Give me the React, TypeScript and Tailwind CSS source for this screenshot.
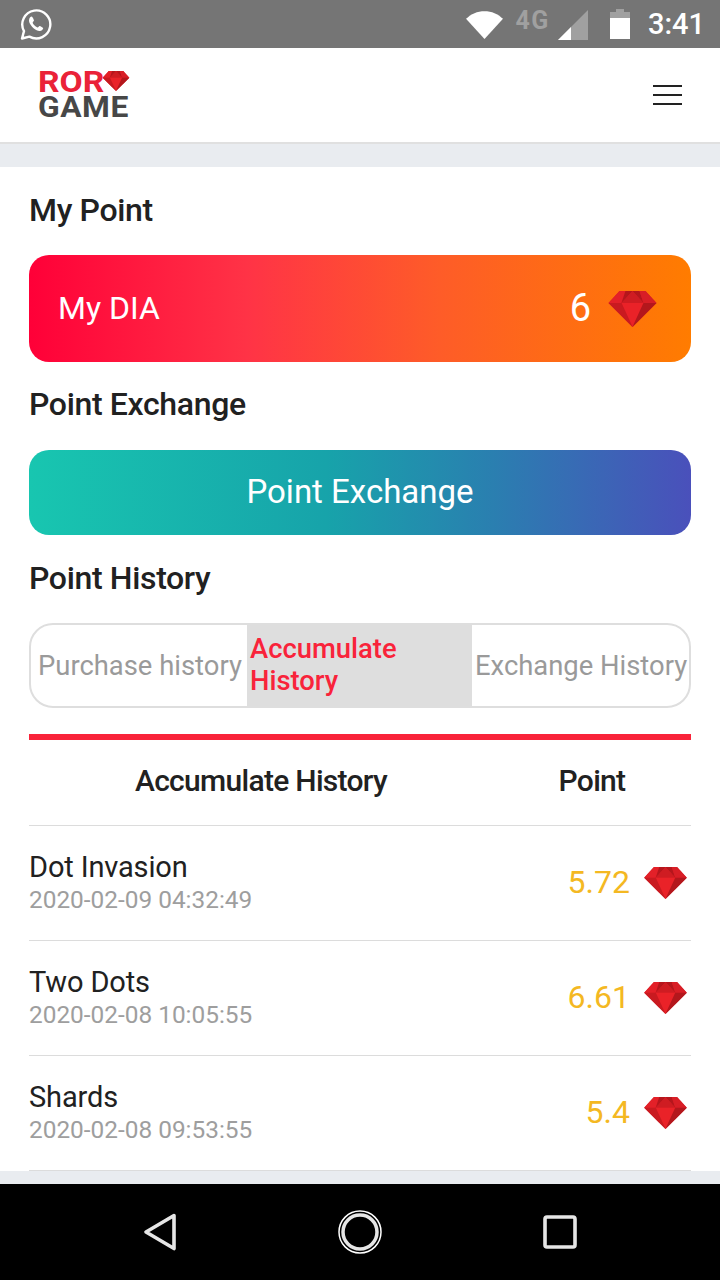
import React from 'react';

// ruby used in the logo, the balance card and the history rows
function Gem({ className }: { className?: string }) {
  return (
    <svg className={className} viewBox="0 0 48 36">
      <polygon points="11,0 37,0 48,12 24,36 0,12" fill="#d81e26" />
      <polygon points="11,0 17,0 13,12 0,12" fill="#e32028" />
      <polygon points="17,0 24,0 13,12" fill="#b5161c" />
      <polygon points="24,0 31,0 35,12" fill="#b5161c" />
      <polygon points="24,0 13,12 35,12" fill="#cf1c22" />
      <polygon points="31,0 37,0 48,12 35,12" fill="#d81e26" />
      <polygon points="13,12 35,12 24,36" fill="#ea2228" />
      <polygon points="35,12 48,12 24,36" fill="#b3171c" />
      <polygon points="0,12 13,12 24,36" fill="#c91a20" />
    </svg>
  );
}

function StatusBar() {
  return (
    <div className="h-12 bg-[#757575] flex items-center pl-[20px] pr-[15px] shrink-0">
      <svg className="w-8 h-8" viewBox="0 0 32 32" fill="none">
        <path
          d="M2 30.500l2-7.400A14 14 0 1 1 9.400 28.600z"
          stroke="#fff"
          strokeWidth="2.400"
          strokeLinejoin="round"
        />
        <path
          d="M11.600 8.600c-.9 0-2.600 1.400-2.600 3.800 0 3.400 4.800 9.600 10.200 10.600 2.200.3 4-1.300 4-2.900 0-.5-3-2.200-3.600-2.200-.7 0-1.200 1.500-1.900 1.500-1.500 0-5-3.300-5-4.800 0-.7 1.300-1.300 1.300-2 0-.5-1.500-3.900-2.400-4z"
          fill="#fff"
        />
      </svg>
      <div className="flex-1" />
      <svg className="w-[37px] h-[29px]" viewBox="0 0 36 28">
        <path d="M0 8.500C5 3.500 11 1 18 1s13 2.500 18 7.500L18 28z" fill="#fff" />
      </svg>
      <span className="ml-[13px] mb-[8px] text-[25px] leading-none font-bold tracking-[1.500px] text-[#a0a0a0]">
        4G
      </span>
      <svg className="ml-[8px] w-[30px] h-[30px] mt-[2px]" viewBox="0 0 30 30">
        <polygon points="30,0 30,30 0,30" fill="#a0a0a0" />
        <polygon points="13,17 13,30 0,30" fill="#fff" />
      </svg>
      <svg className="ml-[22px] w-[20px] h-[30px]" viewBox="0 0 20 30">
        <path d="M6 0h8v3h6v27H0V3h6z" fill="#fff" />
        <path d="M6 0h8v3h6v6H0V3h6z" fill="#a0a0a0" />
      </svg>
      <span className="ml-[18px] text-[29px] leading-none font-medium text-white">3:41</span>
    </div>
  );
}

function Header() {
  return (
    <div className="h-[96px] bg-white border-b-2 border-[#e0e0e0] flex items-center justify-between pl-[38px] pr-[38px] shrink-0">
      <div className="font-bold mt-[-2px]">
        <div className="flex items-center h-[24px]">
          <span className="text-[30px] leading-[24px] text-[#ea2238] scale-x-[1.12] origin-left w-[64px]">ROR</span>
          <Gem className="w-[28px] h-[20px] mt-[-2px]" />
        </div>
        <div className="text-[30px] leading-[24px] tracking-[0.5px] text-[#474747] scale-x-[1.06] origin-left mt-[1px]">GAME</div>
      </div>
      <div className="w-[29px] flex flex-col gap-[7px]">
        <div className="h-[2px] bg-[#222]" />
        <div className="h-[2px] bg-[#222]" />
        <div className="h-[2px] bg-[#222]" />
      </div>
    </div>
  );
}

const rows = [
  { name: 'Dot Invasion', date: '2020-02-09 04:32:49', point: '5.72' },
  { name: 'Two Dots', date: '2020-02-08 10:05:55', point: '6.61' },
  { name: 'Shards', date: '2020-02-08 09:53:55', point: '5.4' },
];

function Heading({ children }: { children: React.ReactNode }) {
  return (
    <h2 className="text-[32px] leading-[44px] font-medium tracking-[-0.35px] text-[#212121]">{children}</h2>
  );
}

export default function App() {
  return (
    <div className="w-[720px] h-[1280px] overflow-hidden flex flex-col bg-[#e9ecf0] font-['Roboto',sans-serif]">
      <StatusBar />
      <Header />

      <div className="mt-[23px] h-[1004px] bg-white px-[29px] shrink-0 overflow-hidden">
        {/* My Point */}
        <div className="pt-[21px]">
          <Heading>My Point</Heading>
        </div>
        <div className="mt-[23px] h-[107px] rounded-[20px] bg-[linear-gradient(to_right,#ff0038_0%,#ff3346_33%,#fe5c28_62%,#ff7c00_100%)] flex items-center pl-[29px] pr-[34px] text-white">
          <span className="text-[32px] mt-[-2px]">My DIA</span>
          <span className="ml-auto text-[38px]">6</span>
          <Gem className="ml-[17px] w-[49px] h-[36px]" />
        </div>

        {/* Point Exchange */}
        <div className="mt-[20px]">
          <Heading>Point Exchange</Heading>
        </div>
        <div className="mt-[24px] h-[85px] rounded-[20px] bg-[linear-gradient(to_right,#18c6b0_0%,#17a3aa_45%,#2a7fb0_70%,#4a50bb_100%)] flex items-center justify-center text-white text-[33px]">
          <span className="mt-[-2px]">Point Exchange</span>
        </div>

        {/* Point History */}
        <div className="mt-[21px]">
          <Heading>Point History</Heading>
        </div>
        <div className="mt-[23px] h-[85px] rounded-[24px] border-2 border-[#dedede] flex overflow-hidden text-[27.4px] leading-[32px]">
          <div className="w-[216px] shrink-0 flex items-center pl-[7px] text-[#9a9a9a] whitespace-nowrap">
            Purchase history
          </div>
          <div className="w-[225px] shrink-0 bg-[#dedede] flex items-center pl-[3px] font-medium text-[#f9233a]">
            <span className="mt-[-2px]">
              Accumulate<br />History
            </span>
          </div>
          <div className="flex-1 flex items-center pl-[3px] text-[#9a9a9a] whitespace-nowrap">
            Exchange History
          </div>
        </div>

        {/* History table */}
        <div className="mt-[26px] h-[6px] bg-[#f9233a]" />
        <div className="h-[86px] flex items-center border-b border-[#dcdcdc] text-[30px] font-medium tracking-[-0.7px] text-[#212121]">
          <div className="w-[464px] text-center mt-[-5px]">Accumulate History</div>
          <div className="flex-1 text-center mt-[-5px]">Point</div>
        </div>
        {rows.map((row) => (
          <div key={row.date} className="h-[115px] flex items-center border-b border-[#dcdcdc]">
            <div className="mt-[-1px]">
              <div className="text-[29px] leading-[34px] tracking-[-0.15px] text-[#212121]">{row.name}</div>
              <div className="text-[24.4px] leading-[30px] text-[#9e9e9e] mt-[1px]">{row.date}</div>
            </div>
            <span className="ml-auto text-[32px] text-[#f4b822] mt-[-2px]">{row.point}</span>
            <Gem className="ml-[14px] mr-[4px] w-[43px] h-[32px]" />
          </div>
        ))}
      </div>

      {/* Android nav bar */}
      <div className="mt-[13px] h-[96px] bg-black flex items-center shrink-0">
        <div className="flex w-full items-center pl-[143px] pr-[143px] justify-between">
          <svg className="w-[34px] h-[38px]" viewBox="0 0 34 38" fill="none">
            <path d="M31 2.500L3 19l28 16.500z" stroke="#e6e6e6" strokeWidth="3.600" strokeLinejoin="round" />
          </svg>
          <svg className="w-[44px] h-[44px]" viewBox="0 0 44 44" fill="none">
            <circle cx="22" cy="22" r="21" stroke="#fff" strokeWidth="1.500" />
            <circle cx="22" cy="22" r="17" stroke="#e6e6e6" strokeWidth="3.500" />
          </svg>
          <svg className="w-[34px] h-[34px]" viewBox="0 0 34 34" fill="none">
            <rect x="2" y="2" width="30" height="30" rx="2" stroke="#e6e6e6" strokeWidth="3.600" />
          </svg>
        </div>
      </div>
    </div>
  );
}
